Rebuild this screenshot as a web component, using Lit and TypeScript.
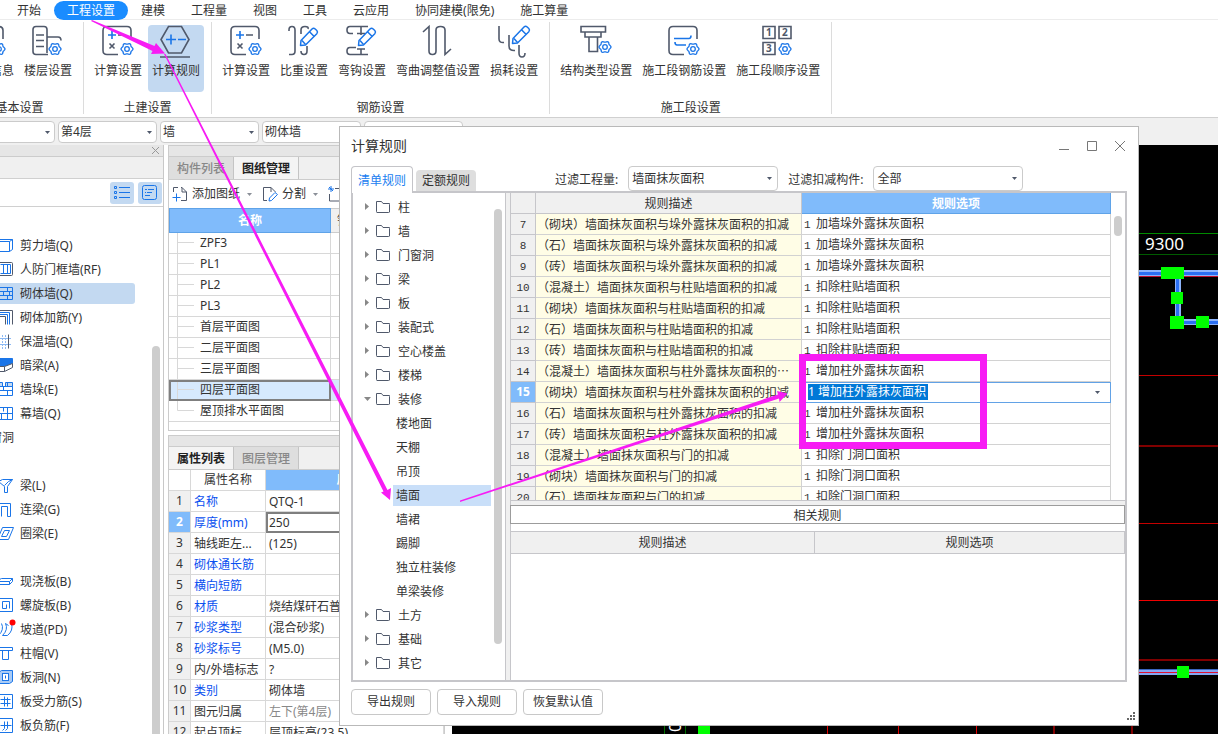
import { LitElement, html, css, svg, nothing } from "lit";
import { customElement } from "lit/decorators.js";
import { classMap } from "lit/directives/class-map.js";

const DARK = "#50596b";
const BLUE = "#1a75e8";

const gear = (cx: number, cy: number) => {
  const pts: string[] = [];
  for (let i = 0; i < 48; i++) {
    const a = (i / 48) * Math.PI * 2;
    const r = 5.4 + 0.6 * Math.cos(6 * a + Math.PI);
    pts.push(`${(cx + r * Math.sin(a)).toFixed(2)},${(cy + r * Math.cos(a)).toFixed(2)}`);
  }
  return svg`<g fill="none" stroke=${BLUE} stroke-width="1.3"><polygon points=${pts.join(" ")}/><circle cx=${cx} cy=${cy} r="2.3"/></g>`;
};

const pencil = (dx: number, dy: number) =>
  svg`<g transform=${`translate(${dx} ${dy})`} fill="#fff" stroke=${BLUE} stroke-width="1.5" stroke-linejoin="round">
    <path d="M12.5 20.5 13 15.5 24 4q1.6-1.5 3.2 0l1.6 1.5q1.4 1.6 0 3.2L17.5 20Z"/><path fill="none" d="M21.5 6.800l4.500 4.500M14 15.500l3.500 4"/></g>`;

const calc = svg`<path d="M16 29.500H5q-4 0-4-4V5.500q0-4 4-4H25q4 0 4 4V14"/><path stroke=${BLUE} d="M6 10h8M10 6v8"/><path d="M16 10H23M7.500 18.500l5 5M12.500 18.500l-5 5"/>${gear(25, 24)}`;

const ribbonIcons: Record<string, unknown> = {
  info: svg`<path d="M16 29.500H5q-4 0-4-4V5.500q0-4 4-4H25q4 0 4 4V14"/>${gear(25, 24)}`,
  floor: svg`<path d="M16 29.500H4q-3 0-3-3V4.500q0-3 3-3h8q3 0 3 3V28M4 10h8M4 15.500h8M4 21.500h8M15 12H26q3 0 3 3.500"/>${gear(23, 24)}`,
  calc,
  rule: svg`<path d="M8.500 1.500h13L29 14.500 21.500 28h-13L1 14.500ZM0 32H30"/><path stroke=${BLUE} d="M6 14.500h10M11 9.500v10M18 14.500h8"/>`,
  weight: svg`<path d="M1 6V5q0-3.500 3-3.500T7 5V26q0 3.500-3 3.500H1M13 9V5q0-3.500 4-3.500T20 4M13 26q0 3.500 3 3.500t3-3.500V21"/>${pencil(0, 0)}`,
  hook: svg`<path d="M7 8.500H4Q1 8.500 1 5t3-3.500H22M15 1.500V10M11 8.500h8M10 22.500H4Q1 22.500 1 26t3 3.500H22M15 24v5M11 24h8"/>${pencil(0, 0)}`,
  bend: svg`<path d="M1 7 7 1.500V26q0 3.500 3.500 3.500T14 26V5q0-3.500 4.500-3.500T23 5V29.500L29 24"/>`,
  loss: svg`<path d="M1 1V14q0 4 5 3.500M11 10V21q0 5 6 4.500M21 20V28q0 4 3 4t3-4"/>${pencil(2, -2)}`,
  struct: svg`<path d="M1 1.500H25.500V7H1ZM5 7h16v5H5ZM9 12h8.500V26.500H9Z"/>${gear(25, 22)}`,
  steel: svg`<path d="M16 29.500H5q-4 0-4-4V5.500q0-4 4-4H25q4 0 4 4V14"/><path stroke=${BLUE} d="M6 13.500H21q2 0 2-3M7 17q0 3 2 3h9"/>${gear(25, 24)}`,
  order: svg`<path d="M1 1.500h12v12H1ZM17 1.500h12v12H17ZM1 17.500h12v12H1Z"/><g class="digits"><text x="4" y="11">1</text><text x="20" y="11">2</text><text x="4" y="27">3</text></g>${gear(23, 24)}`,
};

const paletteIcons: Record<string, unknown> = {
  shear: svg`<path d="M0 4h12v10H0M2 2h13v10l-3 2M12 4l3-2"/>`,
  door: svg`<rect x="0" y="1" width="15" height="13" rx="1" stroke=${DARK}/><path d="M3 3h10v9H3M6 3v9M10 3v9"/>`,
  brick: svg`<path d="M0 2h15v12H0M0 6h15M0 10h15M10 2v4M6 6v4M12 6v4M10 10v4"/>`,
  rebar: svg`<path d="M0 7h8v8" stroke=${DARK}/><path d="M0 5h10v10M0 3h12v12"/><path d="M0 1h15v14" stroke=${DARK}/>`,
  insul: svg`<path d="M2 1v14M11 1v14" stroke=${DARK}/><path stroke-dasharray="1 2" d="M5 2v13M8 2v13M0 5h15M0 11h15"/>`,
  dark: svg`<path fill=${BLUE} d="M0 1h15v5L7 9H0Z"/><path fill="#fff" stroke=${DARK} d="M15 6v4L7 14H0V9h7M7 9v5M7 9l8-3"/>`,
  stack: svg`<path fill="#c3d9f1" d="M0 1h5v4H0ZM8 1h7v4H8Z"/><path d="M0 5h15v9H0M0 9h15M10 1v4M6 5v4M10 9v5"/>`,
  curtain: svg`<path d="M0 2h15v12H0M0 8h15M6 2v4M10 2v6M4 8v6M10 8v6"/>`,
  beam: svg`<path d="M1 4l4-2h10l-5 7v6H7V9L1 4M7 8l4-4 4-2"/>`,
  link: svg`<path d="M1 15V2h12v13h-3V5H4v10"/>`,
  ring: svg`<path d="M5 2h11l-5 12H0ZM7 5h5l-3 6H4Z"/>`,
  slab: svg`<path d="M0 7l4-2h11l-3 3H0M12 8v3H2L0 9M12 11l3-3V5"/>`,
  spiral: svg`<path d="M1 1h14v13H1ZM12 11V4H5v7h4V7"/>`,
  ramp: svg`<path d="M1 14q6-6 3-12M5 14q6-6 3-12M10 14q6-5 4-12M8 2l3 2M5 14l5 0"/>`,
  cap: svg`<path d="M1 2h14v3H1ZM5 5v9h6V5"/>`,
  hole: svg`<path fill="#a9cbf5" d="M1 3l3-2h11V12L12 14H1Z"/><rect fill="#fff" x="5" y="4" width="6" height="7"/><path d="M8 6v3"/>`,
  force: svg`<path d="M1 1h14v14H1ZM3 6h10M3 10h10M7 3v10M10 4v9"/>`,
  neg: svg`<path d="M1 1h14v14H1ZM3 8h11M7 4v7l-2 2M10 4v7l-2 2"/>`,
};

const groups = [
  { name: "基本设置", items: [["info", "工程信息"], ["floor", "楼层设置"]] },
  { name: "土建设置", items: [["calc", "计算设置"], ["rule", "计算规则"]] },
  { name: "钢筋设置", items: [["calc", "计算设置"], ["weight", "比重设置"], ["hook", "弯钩设置"], ["bend", "弯曲调整值设置"], ["loss", "损耗设置"]] },
  { name: "施工段设置", items: [["struct", "结构类型设置"], ["steel", "施工段钢筋设置"], ["order", "施工段顺序设置"]] },
];

const palette: string[][] = [
  ["shear", "剪力墙(Q)"], ["door", "人防门框墙(RF)"], ["brick", "砌体墙(Q)"], ["rebar", "砌体加筋(Y)"],
  ["insul", "保温墙(Q)"], ["dark", "暗梁(A)"], ["stack", "墙垛(E)"], ["curtain", "幕墙(Q)"],
  ["head", "门窗洞"], ["head", ""],
  ["beam", "梁(L)"], ["link", "连梁(G)"], ["ring", "圈梁(E)"], ["head", ""],
  ["slab", "现浇板(B)"], ["spiral", "螺旋板(B)"], ["ramp", "坡道(PD)"], ["cap", "柱帽(V)"],
  ["hole", "板洞(N)"], ["force", "板受力筋(S)"], ["neg", "板负筋(F)"],
];

const drawings = ["ZPF3", "PL1", "PL2", "PL3", "首层平面图", "二层平面图", "三层平面图", "四层平面图", "屋顶排水平面图"];

const properties: [string, string, string][] = [
  ["名称", "QTQ-1", "blue"], ["厚度(mm)", "250", "blue"], ["轴线距左...", "(125)", ""], ["砌体通长筋", "", "blue"],
  ["横向短筋", "", "blue"], ["材质", "烧结煤矸石普通砖", "blue"], ["砂浆类型", "(混合砂浆)", "blue"],
  ["砂浆标号", "(M5.0)", "blue"], ["内/外墙标志", "?", ""], ["类别", "砌体墙", "blue"],
  ["图元归属", "左下(第4层)", "dim"], ["起点顶标...", "层顶标高(23.5)", ""],
];

const rules: [number, string, string][] = [
  [7, "（砌块）墙面抹灰面积与垛外露抹灰面积的扣减", "加墙垛外露抹灰面积"],
  [8, "（石）墙面抹灰面积与垛外露抹灰面积的扣减", "加墙垛外露抹灰面积"],
  [9, "（砖）墙面抹灰面积与垛外露抹灰面积的扣减", "加墙垛外露抹灰面积"],
  [10, "（混凝土）墙面抹灰面积与柱贴墙面积的扣减", "扣除柱贴墙面积"],
  [11, "（砌块）墙面抹灰面积与柱贴墙面积的扣减", "扣除柱贴墙面积"],
  [12, "（石）墙面抹灰面积与柱贴墙面积的扣减", "扣除柱贴墙面积"],
  [13, "（砖）墙面抹灰面积与柱贴墙面积的扣减", "扣除柱贴墙面积"],
  [14, "（混凝土）墙面抹灰面积与柱外露抹灰面积的⋯", "增加柱外露抹灰面积"],
  [15, "（砌块）墙面抹灰面积与柱外露抹灰面积的扣减", "增加柱外露抹灰面积"],
  [16, "（石）墙面抹灰面积与柱外露抹灰面积的扣减", "增加柱外露抹灰面积"],
  [17, "（砖）墙面抹灰面积与柱外露抹灰面积的扣减", "增加柱外露抹灰面积"],
  [18, "（混凝土）墙面抹灰面积与门的扣减", "扣除门洞口面积"],
  [19, "（砌块）墙面抹灰面积与门的扣减", "扣除门洞口面积"],
  [20, "（石）墙面抹灰面积与门的扣减", "扣除门洞口面积"],
];

const tree: (string | string[])[] = [
  "柱", "墙", "门窗洞", "梁", "板", "装配式", "空心楼盖", "楼梯", "装修",
  ["楼地面", "天棚", "吊顶", "墙面", "墙裙", "踢脚", "独立柱装修", "单梁装修"],
  "土方", "基础", "其它",
];

const shared = css`
  * { box-sizing: border-box; }
  :host { font: 12px/16px "Noto Sans", "Noto Sans CJK SC", sans-serif; color: #333; }
  button, select, input { font: inherit; color: inherit; margin: 0; padding: 0; border: 0; background: none; border-radius: 0; white-space: nowrap; }
  ul { list-style: none; margin: 0; padding: 0; }
  table { border-collapse: separate; border-spacing: 0; table-layout: fixed; }
  th, td { padding: 0; font-weight: normal; text-align: left; white-space: nowrap; overflow: hidden; }
  svg { display: block; flex: none; }
  .combo { display: grid; align-items: center; background: #fff; border: 1px solid #cbcbcb; border-radius: 4px; }
  .combo > * { grid-area: 1 / 1; }
  .combo select { width: 100%; height: 100%; appearance: none; }
  .combo svg { justify-self: end; pointer-events: none; }
`;

const caret = html`<svg width="5" height="3" viewBox="0 0 5 3" aria-hidden="true"><path fill="#50596b" d="M0 0h5L2.500 3Z"/></svg>`;
const softCaret = html`<svg width="5" height="3" viewBox="0 0 5 3" aria-hidden="true"><path fill="#8a8f98" stroke="none" d="M0 0h5L2.500 3Z"/></svg>`;

@customElement("app-ribbon")
export class AppRibbon extends LitElement {
  static styles = [shared, css`
    :host { display: block; background: #fff; overflow: hidden; }
    .menu { display: flex; height: 20px; padding: 1px 0 0 4px; border-bottom: 1px solid #ececec; }
    .menu button { padding: 0 13px; height: 19px; line-height: 19px; border-radius: 10px; }
    .menu .on { background: #1a8cff; color: #fff; }
    .groups { display: flex; height: 98px; margin-left: -44px; padding: 2px 0 3px; border-bottom: 1px solid #d0d0d0; }
    .group { display: flex; flex-direction: column; justify-content: space-between; padding: 3px 7px 0 6px; border-right: 1px solid #dcdcdc; }
    .tools { display: flex; gap: 2px; }
    .tools button { display: flex; flex-direction: column; align-items: center; gap: 5px; height: 67px; padding: 0 4px; border-radius: 4px; }
    .tools svg { overflow: visible; fill: none; stroke: #50596b; stroke-width: 1.6; }
    .tools .on { background: #c3d9f1; }
    .digits { fill: #50596b; stroke: none; font: bold 10px "Noto Sans", sans-serif; }
    .name { text-align: center; line-height: 12px; padding-left: 1px; }
    .filters { display: flex; gap: 3px; height: 27px; margin-left: -44px; padding: 3px 0 2px; background: #f0f0f0; }
    .filters .combo { width: 99px; padding: 0 4px 0 2px; }
  `];
  render() {
    const menu = ["开始", "工程设置", "建模", "工程量", "视图", "工具", "云应用", "协同建模(限免)", "施工算量"];
    const filters = [["楼层类型", ""], ["楼层", "第4层"], ["构件大类", "墙"], ["构件类型", "砌体墙"], ["构件", ""]];
    return html`
      <nav class="menu">${menu.map((m, i) => html`<button class=${i === 1 ? "on" : ""}>${m}</button>`)}</nav>
      <div class="groups">${groups.map(g => html`
        <section class="group">
          <div class="tools">${g.items.map(([icon, label]) => html`
            <button class=${icon === "rule" ? "on" : ""}>
              <svg width="32" height="33" viewBox="0 0 32 33" aria-hidden="true">${ribbonIcons[icon]}</svg><span>${label}</span>
            </button>`)}</div>
          <div class="name">${g.name}</div>
        </section>`)}</div>
      <div class="filters">${filters.map(([l, v]) => html`
        <label class="combo"><select aria-label=${l}><option>${v}</option></select>${caret}</label>`)}</div>`;
  }
}

@customElement("component-palette")
export class ComponentPalette extends LitElement {
  static styles = [shared, css`
    :host { display: flex; flex-direction: column; background: #fff; border-right: 1px solid #c8c8c8; min-height: 0; overflow: hidden; }
    .title { display: flex; justify-content: flex-end; align-items: center; height: 12px; padding-right: 3px; background: #e6e6e6; border-bottom: 1px solid #ccc; flex: none; }
    .band { height: 22px; background: #f0f0f0; border-bottom: 1px solid #d0d0d0; flex: none; }
    .modes { display: flex; justify-content: flex-end; align-items: center; gap: 4px; height: 28px; padding-right: 1px; border-bottom: 1px solid #d0d0d0; flex: none; }
    .modes button { display: grid; place-items: center; width: 24px; height: 22px; border-radius: 3px; background: #c3d9f1; }
    .body { display: flex; justify-content: space-between; min-height: 0; padding-right: 3px; }
    ul { width: 135px; padding-top: 26px; }
    li { display: flex; align-items: center; height: 24px; }
    li button { display: flex; align-items: center; gap: 7px; width: 135px; height: 21px; border-radius: 0 3px 3px 0; }
    li svg { margin-left: -3px; fill: none; stroke: #1a75e8; overflow: visible; }
    li span { padding-top: 2px; }
    .on { background: #c3d9f1; }
    .head { margin-left: -22px; }
    .thumb { width: 8px; margin-top: 139px; border-radius: 4px 4px 0 0; background: #cdcdcd; }
  `];
  render() {
    return html`
      <div class="title"><svg width="9" height="9" viewBox="0 0 9 9" aria-hidden="true"><path d="M1 1l7 7M8 1 1 8" stroke="#999"/></svg></div>
      <div class="band"></div>
      <div class="modes">
        <button aria-label="列表"><svg width="16" height="14" viewBox="0 0 16 14" fill="none" stroke=${BLUE}><path d="M5 1.500h11M5 6.500h11M5 11.500h11"/><path d="M.500 .500h2v2h-2ZM.500 5.500h2v2h-2ZM.500 10.500h2v2h-2Z"/></svg></button>
        <button aria-label="详情"><svg width="16" height="16" viewBox="0 0 16 16" fill="none" stroke=${BLUE}><rect x=".5" y=".5" width="14" height="14" rx="2"/><path d="M3 4.500h2M6 4.500h6M3 7.500h1M5 7.500h5M3 10.500h5"/></svg></button>
      </div>
      <div class="body">
        <ul>${palette.map(([icon, name]) => html`<li>${icon === "head"
          ? html`<span class="head">${name}</span>`
          : html`<button class=${icon === "brick" ? "on" : ""}><svg width="16" height="16" viewBox="-0.5 -0.5 16 16" aria-hidden="true">${paletteIcons[icon]}${icon === "ramp" ? svg`<circle cx="15" cy="1" r="3" fill="#f00" stroke="none"/>` : nothing}</svg><span>${name}</span></button>`}</li>`)}</ul>
        <div class="thumb"></div>
      </div>`;
  }
}

@customElement("side-panels")
export class SidePanels extends LitElement {
  static styles = [shared, css`
    :host { display: flex; flex-direction: column; gap: 4px; min-height: 0; overflow: hidden; background: #fff; }
    .dock { border: 1px solid #ccc; background: #fff; flex: none; }
    .grip { height: 11px; background: #e6e6e6; border-bottom: 1px solid #ccc; }
    .tabs { display: flex; height: 23px; background: #f0f0f0; border-bottom: 1px solid #ccc; }
    .tabs button { width: 65px; padding-top: 2px; background: #dedede; color: #888; font-weight: 500; border-right: 1px solid #c4c4c4; }
    .tabs .on { background: #f4f4f4; color: #222; font-weight: bold; }
    .bar { display: flex; align-items: center; height: 28px; padding-left: 3px; }
    .bar button { display: flex; align-items: center; gap: 4px; }
    .bar .more { padding: 0 10px 0 7px; }
    .bar svg { fill: none; stroke: #50596b; }
    table { width: 100%; }
    .draw { margin-bottom: 8px; }
    .draw th { height: 25px; background: #80bbfb; border: 1px solid #5fa3e8; color: #fff; font-weight: bold; text-align: center; }
    .draw th + th { background: #f0f0f0; color: #333; font-weight: normal; border-color: #ccc; border-left: 0; text-align: left; padding-left: 6px; }
    .draw td { height: 21px; border-right: 1px solid #d8d8d8; border-bottom: 1px solid #d8d8d8; }
    .leaf { display: flex; align-items: center; gap: 6px; height: 20px; padding-left: 8px; }
    .leaf svg { stroke: #d8d8d8; }
    .draw .on td { background: #d6e9fd; }
    .draw .on td:first-child { outline: 2px solid #7f7f7f; outline-offset: -2px; }
    .props th, .props td { height: 21px; border-right: 1px solid #d8d8d8; border-bottom: 1px solid #d8d8d8; padding: 1px 0 0 3px; }
    .props thead th { text-align: center; padding: 0; }
    .props thead th:last-child { background: #80bbfb; color: #fff; font-weight: bold; }
    .props tbody th { background: #f0f0f0; text-align: center; padding: 0; }
    .props .blue { color: #0a50f0; }
    .props .grey { color: #888; }
    .props .on th { background: #80bbfb; color: #fff; font-weight: bold; }
    .props .on td:last-child { outline: 2px solid #7f7f7f; outline-offset: -2px; }
    .n { width: 22px; } .k { width: 75px; } .d { width: 162px; }
  `];
  render() {
    return html`
      <section class="dock">
        <div class="grip"></div>
        <div class="tabs"><button>构件列表</button><button class="on">图纸管理</button></div>
        <div class="bar">
          <button><svg width="16" height="16" viewBox="0 0 16 16"><path d="M1.500 6V1.500H6M9 1.500h1l4.500 4.500v8.500H9M10 1.500V6h4.500"/><path stroke=${BLUE} d="M4.500 7.500v8M.500 11.500h8"/></svg>添加图纸</button><span class="more">${softCaret}</span>
          <button><svg width="16" height="16" viewBox="0 0 16 16"><path d="M5 14.500H1.500v-13H9l4.500 4.500M9 1.500V6"/><path stroke=${BLUE} d="M7 15l.500-3L13 6.500l2.500 2L9.500 14.500Z"/></svg>分割</button><span class="more">${softCaret}</span>
          <button aria-label="定位"><svg width="16" height="16" viewBox="0 0 16 16"><path d="M7 2.500h8M1.500 8v7H15"/><path stroke=${BLUE} d="M3 0v6M0 3h6M1 1l4 4"/></svg></button>
        </div>
        <table class="draw">
          <colgroup><col class="d"><col></colgroup>
          <thead><tr><th>名称</th><th>锁定</th></tr></thead>
          <tbody>${drawings.map((d, i) => html`<tr class=${i === 7 ? "on" : ""}><td><div class="leaf"><svg width="17" height="20" viewBox="0 0 17 20"><path fill="none" d=${i === 8 ? "M.500 0V9.500H17" : "M.500 0V20M.500 9.500H17"}/></svg>${d}</div></td><td></td></tr>`)}</tbody>
        </table>
      </section>
      <section class="dock">
        <div class="grip"></div>
        <div class="tabs"><button class="on">属性列表</button><button>图层管理</button></div>
        <table class="props">
          <colgroup><col class="n"><col class="k"><col></colgroup>
          <thead><tr><th></th><th>属性名称</th><th>属性值</th></tr></thead>
          <tbody>${properties.map(([k, v, c], i) => html`<tr class=${i === 1 ? "on" : ""}><th>${i + 1}</th><td class=${classMap({ blue: c === "blue" })}>${k}</td><td class=${classMap({ grey: c === "dim" })}>${v}</td></tr>`)}</tbody>
        </table>
      </section>`;
  }
}

@customElement("model-view")
export class ModelView extends LitElement {
  static styles = css`
    :host { display: block; background: #000; overflow: hidden; }
    svg { display: block; width: 100%; height: 100%; }
    .dim { fill: #fff; font: 17px "Noto Sans", sans-serif; }
  `;
  render() {
    const node = (x: number, y: number, w: number, h: number) => svg`<rect x=${x} y=${y} width=${w} height=${h} fill="#0f0"/>`;
    return html`<svg role="img" aria-label="平面图">
      <g shape-rendering="crispEdges">
        <path d="M600 88.500H2000" stroke="#008a00"/><path d="M600 109.500H2000" stroke="#005c00"/>
        <path d="M600 230.500H2000M600 378.500H2000" stroke="#c40000"/><path d="M600 455.500H2000" stroke="#f00000"/>
        <path d="M600 301H2000M600 515H2000" stroke="#800000" stroke-width="2"/>
        <path d="M375.500 560V900M446.500 560V900M524.500 560V900" stroke="#e00000"/><path d="M602 560V900M680 560V900" stroke="#800000" stroke-width="2"/>
        <path d="M212.500 560V900M233.500 560V900" stroke="#007000"/>
        <path d="M600 128H2000M725.500 128V177H2000" fill="none" stroke="#8db4fb" stroke-width="6"/>
        <path d="M600 128H2000M725.500 128V177H2000" fill="none" stroke="#2b6ff2" stroke-width="3"/>
        <path d="M600 131.500H2000" stroke="#c01030"/>
        <path d="M600 527H2000" stroke="#86a6f3" stroke-width="6"/><path d="M600 527.500H2000" stroke="#e01030"/><path d="M600 524.500H2000" stroke="#3b66c0"/>
        ${node(709, 122, 23, 12)}${node(719, 147, 12, 12)}${node(718, 171, 14, 13)}${node(744, 171, 13, 12)}${node(725, 521, 12, 12)}${node(246, 560, 12, 60)}
      </g>
      <text class="dim" x="693" y="105">9300</text>
      <text class="dim" transform="translate(229 587) rotate(-90)">0</text>
    </svg>`;
  }
}

@customElement("rules-dialog")
export class RulesDialog extends LitElement {
  static styles = [shared, css`
    :host { display: flex; flex-direction: column; background: #fff; border: 1px solid #b9b9b9; padding: 0 11px 7px; }
    header { display: flex; justify-content: space-between; align-items: center; height: 39px; padding: 0 1px 2px 0; }
    h1 { margin: 0; font-size: 14px; line-height: 20px; font-weight: normal; }
    .win { display: flex; gap: 16px; }
    .win button { display: block; width: 12px; height: 12px; }
    .win svg { fill: none; stroke: #777; }
    .top { display: flex; align-items: flex-end; height: 25px; }
    .tab { width: 60px; height: 21px; background: #dedede; border-radius: 4px 4px 0 0; margin-left: 3px; }
    .tab.on { width: 62px; height: 27px; margin: 0 0 -2px; padding-top: 1px; background: #fff; border: 1px solid #c4c4c8; border-bottom: 0; color: #1a80f0; position: relative; z-index: 1; }
    .field { display: flex; align-items: center; height: 25px; gap: 10px; }
    .field label { padding-top: 2px; }
    .field .combo { width: 150px; height: 25px; padding: 0 5px 0 3px; }
    .field select { padding-top: 1px; }
    .one { margin-left: 79px; }
    .two { margin-left: 10px; }
    .frame { flex: 1; display: flex; gap: 4px; min-height: 0; border: 2px solid #c6c6ca; background: #f0f0f0; }
    .tree { display: flex; justify-content: space-between; width: 153px; padding: 2px 3px 0 0; background: #fff; border-right: 1px solid #c6c6ca; overflow: hidden; }
    .tree > ul { padding-left: 10px; }
    .tree ul ul { padding-left: 30px; }
    .tree li li { display: flex; align-items: center; height: 24px; }
    .tree button { display: flex; align-items: center; gap: 8px; height: 24px; }
    .tree span { padding-top: 2px; }
    .tree .leaf { width: 98px; height: 21px; padding: 1px 0 0 3px; }
    .tree .leaf.on { background: #c9dff9; }
    .thumb { width: 8px; height: 435px; margin-top: 14px; border-radius: 4px; background: #cdcdcd; }
    .main { flex: 1; min-width: 0; display: flex; flex-direction: column; border-left: 1px solid #c6c6ca; background: #fff; }
    .grid { display: flex; flex: none; height: 308px; border-bottom: 1px solid #c6c6ca; overflow: hidden; }
    .rules { flex: 1; height: 100px; font-family: "Noto Sans CJK SC", sans-serif; }
    .rules th, .rules td { height: 21px; line-height: 16px; border-right: 1px solid #d2d2d2; border-bottom: 1px solid #d2d2d2; }
    .rules thead th { background: #f0f0f0; text-align: center; border-color: #c6c6ca; }
    .rules thead th.sel { background: #80bbfb; color: #fff; font-weight: bold; border-color: #5fa3e8; }
    .rules tbody th { padding-top: 2px; background: #f0f0f0; text-align: center; font-family: "Liberation Mono", monospace; font-size: 11px; border-color: #c6c6ca; }
    .desc { background: #fffde6; padding-left: 1px; }
    .opt { padding-left: 2px; }
    .opt span { display: inline-block; width: 12px; font: 11px/16px "Liberation Mono", monospace; }
    .rules .cur th { padding: 0; background: #80bbfb; color: #fff; font: bold 12px/16px "Noto Sans", sans-serif; }
    .rules .cur .opt { padding: 0; outline: 1px solid #62a2e6; outline-offset: -1px; }
    .edit { display: flex; align-items: center; justify-content: space-between; padding: 0 10px 0 6px; }
    .edit input { width: 120px; height: 16px; line-height: 16px; background: #0078d7; color: #fff; font-family: "Noto Sans", "Noto Sans CJK SC", sans-serif; }
    .n { width: 25px; } .k { width: 266px; } .r { width: 304px; }
    .scroll { width: 14px; flex: none; padding: 23px 3px 0; }
    .scroll div { height: 20px; border-radius: 4px; background: #cdcdcd; }
    .split { height: 4px; background: #f0f0f0; flex: none; }
    .caption { flex: none; height: 19px; line-height: 19px; margin-left: -1px; border: 1px solid #9c9c9c; text-align: center; }
    .related { width: 100%; margin-top: 7px; }
    .related th { height: 23px; text-align: center; background: #f0f0f0; border: 1px solid #c6c6ca; border-left: 0; }
    footer { display: flex; align-items: center; gap: 6px; padding-bottom: 2px; height: 36px; padding-top: 6px; }
    footer button { width: 80px; height: 26px; border: 1px solid #c8c8c8; border-radius: 4px; }
    .size { margin: auto -8px -4px auto; }
  `];
  render() {
    const arrow = (open: boolean) => svg`<path fill="#888" d=${open ? "M1 6h7L4.500 10Z" : "M2 4v7l4-3.500Z"}/>`;
    const branch = (name: string, open: boolean) => html`<button><svg width="27" height="16" viewBox="0 0 27 16" aria-hidden="true">${arrow(open)}<path fill="none" stroke="#50596b" d="M26.500 5.500V13q0 .500-1 .500H14q-.500 0-.500-1V2.500h5l1.500 2h6.500Z"/></svg><span>${name}</span></button>`;
    return html`
      <header><h1>计算规则</h1>
        <div class="win">
          <button aria-label="最小化"><svg width="12" height="12"><path d="M1 9.500h10"/></svg></button>
          <button aria-label="最大化"><svg width="12" height="12"><path d="M1.500 1.500h9v9h-9Z"/></svg></button>
          <button aria-label="关闭"><svg width="12" height="12"><path d="M1 1l10 10M11 1 1 11"/></svg></button>
        </div></header>
      <div class="top">
        <button class="tab on">清单规则</button><button class="tab">定额规则</button>
        <div class="field one"><label for="qty">过滤工程量:</label><div class="combo"><select id="qty"><option>墙面抹灰面积</option></select>${caret}</div></div>
        <div class="field two"><label for="part">过滤扣减构件:</label><div class="combo"><select id="part"><option>全部</option></select>${caret}</div></div>
      </div>
      <div class="frame">
        <nav class="tree">
          <ul>${tree.map(t => Array.isArray(t)
            ? html`<li><ul>${t.map(c => html`<li><button class=${c === "墙面" ? "leaf on" : "leaf"}>${c}</button></li>`)}</ul></li>`
            : html`<li>${branch(t, t === "装修")}</li>`)}</ul>
          <div class="thumb"></div>
        </nav>
        <div class="main">
          <div class="grid">
            <table class="rules">
              <colgroup><col class="n"><col class="k"><col></colgroup>
              <thead><tr><th></th><th>规则描述</th><th class="sel">规则选项</th></tr></thead>
              <tbody>${rules.map(([n, d, o]) => html`<tr class=${n === 15 ? "cur" : ""}><th>${n}</th><td class="desc">${d}</td><td class="opt">${n === 15
                ? html`<div class="edit"><input aria-label="规则选项" .value=${"1 " + o}>${caret}</div>`
                : html`<span>1</span>${o}`}</td></tr>`)}</tbody>
            </table>
            <div class="scroll"><div></div></div>
          </div>
          <div class="split"></div>
          <div class="caption">相关规则</div>
          <table class="related"><colgroup><col class="r"><col></colgroup><thead><tr><th>规则描述</th><th>规则选项</th></tr></thead></table>
        </div>
      </div>
      <footer><button>导出规则</button><button>导入规则</button><button>恢复默认值</button>
        <svg class="size" width="8" height="8" fill="#666"><path d="M6 0h2v2H6ZM3 3h2v2H3ZM6 3h2v2H6ZM0 6h2v2H0ZM3 6h2v2H3ZM6 6h2v2H6Z"/></svg></footer>`;
  }
}

@customElement("app-root")
export class AppRoot extends LitElement {
  static styles = css`
    :host { display: flex; flex-direction: column; position: relative; height: 100vh; overflow: hidden; background: #fff; }
    .work { flex: 1; display: grid; grid-template-columns: 164px 277px 1fr; column-gap: 4px; min-height: 0; background: #fff; }
    model-view { margin-left: 3px; }
    rules-dialog { position: absolute; left: 339px; right: 79px; top: 126px; bottom: 8px; }
    .marks { position: absolute; inset: 0; width: 100%; height: 100%; pointer-events: none; }
  `;
  render() {
    return html`
      <app-ribbon></app-ribbon>
      <div class="work"><component-palette></component-palette><side-panels></side-panels><model-view></model-view></div>
      <rules-dialog></rules-dialog>
      <svg class="marks" fill="#f71cf4" aria-hidden="true">
        <path d="M91 21 92 20 154.500 46 156 43 165 53.500 151 54 152.500 51Z"/>
        <path d="M164 54 165.500 54 387.500 490 391 488 390 500 381 492.500 383.500 491.500Z"/>
        <path d="M460 500.500 778 394.500 777 391 787.500 393.500 779.500 402 779 398.500 460 502Z"/>
        <rect x="802.5" y="357.500" width="181" height="88" fill="none" stroke="#f71cf4" stroke-width="7"/>
      </svg>`;
  }
}
